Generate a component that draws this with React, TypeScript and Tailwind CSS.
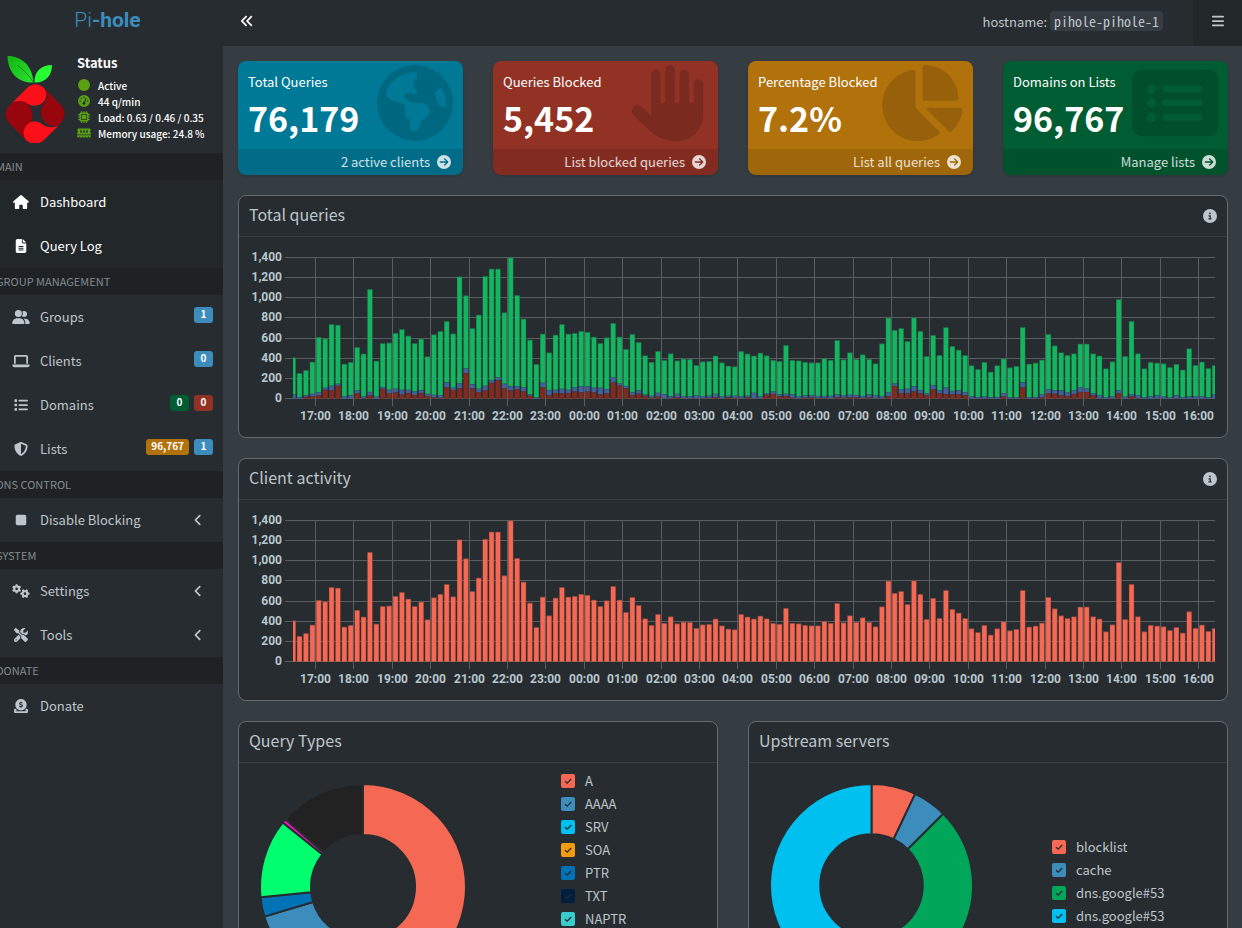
import React from "react";
import {
  FaAnglesLeft,
  FaAngleLeft,
  FaBars,
  FaChartPie,
  FaCircle,
  FaCircleArrowRight,
  FaCircleDollarToSlot,
  FaCircleInfo,
  FaEarthAmericas,
  FaFileLines,
  FaGaugeHigh,
  FaGears,
  FaHand,
  FaHouse,
  FaLaptop,
  FaList,
  FaMemory,
  FaMicrochip,
  FaRectangleList,
  FaScrewdriverWrench,
  FaShieldHalved,
  FaStop,
  FaUserGroup,
} from "react-icons/fa6";
import type { IconType } from "react-icons";

// queries per ten minute slot, 16:25 to 16:25 the next day
const totals = [
  407, 252, 281, 364, 609, 596, 738, 731, 344, 361, 510, 444, 1086, 374, 549,
  553, 649, 688, 622, 549, 592, 417, 636, 669, 768, 645, 1211, 1023, 698, 831,
  1215, 1288, 1288, 854, 1400, 1026, 791, 583, 341, 642, 457, 632, 738, 642,
  649, 669, 659, 612, 549, 606, 748, 612, 490, 639, 559, 427, 361, 470, 381,
  447, 377, 394, 391, 331, 367, 371, 424, 357, 324, 318, 470, 444, 424, 453,
  427, 381, 371, 530, 381, 377, 361, 357, 357, 400, 381, 579, 387, 457, 391,
  437, 391, 348, 546, 801, 679, 698, 569, 804, 669, 420, 629, 430, 708, 520,
  483, 430, 328, 291, 361, 265, 328, 397, 308, 321, 708, 344, 354, 384, 639,
  526, 457, 430, 447, 543, 543, 447, 424, 298, 367, 986, 420, 768, 447, 298,
  361, 354, 348, 311, 341, 285, 497, 331, 364, 301, 331,
];

const blocked = [
  0, 0, 20, 23, 33, 89, 83, 129, 0, 0, 53, 7, 33, 0, 99, 53, 63, 43, 56, 36, 56,
  26, 13, 10, 113, 83, 103, 255, 103, 63, 83, 156, 182, 103, 83, 93, 73, 30, 0,
  113, 36, 56, 53, 56, 73, 63, 73, 63, 43, 53, 162, 132, 103, 36, 50, 30, 10,
  23, 3, 7, 13, 3, 3, 3, 3, 7, 13, 3, 13, 7, 3, 13, 3, 3, 40, 46, 23, 26, 10, 3,
  10, 13, 7, 7, 3, 13, 10, 13, 13, 7, 13, 3, 3, 26, 126, 53, 53, 73, 53, 33, 93,
  53, 46, 43, 43, 33, 3, 0, 3, 0, 0, 23, 0, 0, 113, 0, 3, 13, 53, 50, 33, 26,
  46, 66, 66, 33, 3, 0, 3, 53, 0, 23, 7, 0, 0, 3, 0, 0, 3, 0, 0, 0, 0, 0, 0,
];

const cached = [
  43, 17, 13, 26, 30, 20, 46, 20, 23, 33, 30, 16, 33, 23, 17, 36, 36, 46, 33,
  36, 30, 23, 26, 23, 50, 26, 50, 46, 40, 36, 46, 26, 30, 46, 40, 30, 40, 13,
  13, 46, 50, 33, 46, 33, 40, 60, 50, 46, 66, 43, 50, 20, 23, 26, 33, 13, 20,
  36, 40, 17, 36, 20, 20, 30, 20, 23, 36, 20, 17, 23, 20, 17, 56, 20, 13, 26,
  20, 23, 33, 20, 23, 20, 20, 20, 26, 30, 23, 26, 23, 20, 30, 30, 20, 36, 26,
  40, 46, 50, 33, 20, 40, 30, 66, 33, 40, 30, 20, 17, 20, 13, 17, 30, 13, 13,
  50, 13, 13, 30, 40, 33, 50, 36, 36, 46, 36, 20, 30, 13, 20, 30, 23, 20, 26,
  13, 23, 30, 23, 13, 30, 13, 23, 23, 23, 13, 43,
];

const hours = [
  "17:00", "18:00", "19:00", "20:00", "21:00", "22:00", "23:00", "00:00",
  "01:00", "02:00", "03:00", "04:00", "05:00", "06:00", "07:00", "08:00",
  "09:00", "10:00", "11:00", "12:00", "13:00", "14:00", "15:00", "16:00",
];

const LEFT = 44;
const BASE = 151;
const PLOT_HEIGHT = 141;
const STEP = 6.4;

const scale = (value: number) => (value / 1400) * PLOT_HEIGHT;

interface Series {
  values: number[];
  fill: string;
  stroke: string;
}

const BarChart = ({ id, series }: { id: string; series: Series[] }) => {
  const ticks = [0, 200, 400, 600, 800, 1000, 1200, 1400];
  return (
    <svg
      viewBox="0 0 968 180"
      className="block w-full font-['Roboto',sans-serif] text-[12px] font-bold"
      role="img"
      aria-label={id}
    >
      <clipPath id={id}>
        <rect x={LEFT} y="0" width="922" height="170" />
      </clipPath>
      {ticks.map((tick) => {
        const y = Math.round(BASE - scale(tick)) + 0.5;
        return (
          <g key={tick}>
            <line x1="36" x2="966" y1={y} y2={y} stroke="#595d5f" />
            <text x="33" y={y + 3.5} textAnchor="end" fill="#b8c7ce">
              {tick.toLocaleString("en-US")}
            </text>
          </g>
        );
      })}
      {hours.map((hour, i) => {
        const x = Math.round(66 + i * 38.4) + 0.5;
        return (
          <g key={hour}>
            <line x1={x} x2={x} y1="10" y2="159" stroke="#595d5f" />
            <text x={x} y="173" textAnchor="middle" fill="#b8c7ce">
              {hour}
            </text>
          </g>
        );
      })}
      <g clipPath={`url(#${id})`}>
        {totals.map((_, i) => {
          let y = BASE + 0.5;
          return series.map((s) => {
            const h = scale(s.values[i]);
            y -= h;
            const x = LEFT + i * STEP - 2.4;
            return (
              <g key={s.fill + i}>
                <rect x={x} y={y} width="5.1" height={h} fill={s.stroke} />
                <rect
                  x={x + 0.4}
                  y={y + Math.min(0.8, h)}
                  width="4.3"
                  height={Math.max(h - 0.8, 0)}
                  fill={s.fill}
                />
              </g>
            );
          });
        })}
      </g>
    </svg>
  );
};

interface Slice {
  from: number;
  to: number;
  color: string;
}

const point = (r: number, deg: number) => {
  const a = ((deg - 90) * Math.PI) / 180;
  return `${(r * Math.cos(a)).toFixed(2)} ${(r * Math.sin(a)).toFixed(2)}`;
};

interface DoughnutProps {
  label: string;
  slices: Slice[];
  className: string;
}

const Doughnut = ({ label, slices, className }: DoughnutProps) => (
  <svg viewBox="-103 -103 206 206" className={className} role="img" aria-label={label}>
    {slices.map(({ from, to, color }) => {
      const large = to - from > 180 ? 1 : 0;
      return (
        <path
          key={color}
          d={`M${point(103, from)}A103 103 0 ${large} 1 ${point(103, to)}L${point(52, to)}A52 52 0 ${large} 0 ${point(52, from)}Z`}
          fill={color}
          stroke="#272c30"
          strokeWidth="2"
        />
      );
    })}
  </svg>
);

const queryTypes: Slice[] = [
  { from: 0, to: 190, color: "#f56954" },
  { from: 190, to: 253.3, color: "#3c8dbc" },
  { from: 253.3, to: 264.3, color: "#0073b7" },
  { from: 264.3, to: 308.8, color: "#01ff70" },
  { from: 308.8, to: 311.2, color: "#f012be" },
  { from: 311.2, to: 360, color: "#222222" },
];

const upstreams: Slice[] = [
  { from: 0, to: 25.5, color: "#f56954" },
  { from: 25.5, to: 45, color: "#3c8dbc" },
  { from: 45, to: 180, color: "#00a65a" },
  { from: 180, to: 360, color: "#00c0ef" },
];

const Legend = ({ items }: { items: { name: string; color: string }[] }) => (
  <ul>
    {items.map(({ name, color }, i) => (
      <li key={i} className="h-[23px]">
        <label className="flex h-full items-center text-[13px]">
          <span className="grid size-[14px] place-items-center">
            <input
              type="checkbox"
              defaultChecked
              className="col-start-1 row-start-1 size-[14px] appearance-none rounded-[2px]"
              style={{ backgroundColor: color }}
            />
            <svg viewBox="0 0 14 14" className="pointer-events-none col-start-1 row-start-1 size-[14px]">
              <path d="M4 7.2 6.2 9.2 10.2 5" fill="none" stroke="#272c30" strokeWidth="1.3" />
            </svg>
          </span>
          <span className="ml-[10px]">{name}</span>
        </label>
      </li>
    ))}
  </ul>
);

interface Badge {
  text: string;
  className: string;
}

interface NavItem {
  name: string;
  icon: IconType;
  active?: boolean;
  tree?: boolean;
  badges?: Badge[];
}

const nav: { title: string; items: NavItem[] }[] = [
  {
    title: "MAIN",
    items: [
      { name: "Dashboard", icon: FaHouse, active: true },
      { name: "Query Log", icon: FaFileLines, active: true },
    ],
  },
  {
    title: "GROUP MANAGEMENT",
    items: [
      { name: "Groups", icon: FaUserGroup, badges: [{ text: "1", className: "bg-[#3c8dbc]" }] },
      { name: "Clients", icon: FaLaptop, badges: [{ text: "0", className: "bg-[#3c8dbc]" }] },
      {
        name: "Domains",
        icon: FaList,
        badges: [
          { text: "0", className: "bg-[#005c32]" },
          { text: "0", className: "bg-[#913225]" },
        ],
      },
      {
        name: "Lists",
        icon: FaShieldHalved,
        badges: [
          { text: "96,767", className: "bg-[#b1720c]" },
          { text: "1", className: "bg-[#3c8dbc]" },
        ],
      },
    ],
  },
  { title: "DNS CONTROL", items: [{ name: "Disable Blocking", icon: FaStop, tree: true }] },
  {
    title: "SYSTEM",
    items: [
      { name: "Settings", icon: FaGears, tree: true },
      { name: "Tools", icon: FaScrewdriverWrench, tree: true },
    ],
  },
  { title: "DONATE", items: [{ name: "Donate", icon: FaCircleDollarToSlot }] },
];

const stats = [
  { icon: FaCircle, text: "Active" },
  { icon: FaGaugeHigh, text: "44 q/min" },
  { icon: FaMicrochip, text: "Load: 0.63 / 0.46 / 0.35" },
  { icon: FaMemory, text: "Memory usage: 24.8 %" },
];

const cards = [
  { label: "Total Queries", value: "76,179", link: "2 active clients", icon: FaEarthAmericas, className: "bg-[#007997]" },
  { label: "Queries Blocked", value: "5,452", link: "List blocked queries", icon: FaHand, className: "bg-[#913225]" },
  { label: "Percentage Blocked", value: "7.2%", link: "List all queries", icon: FaChartPie, className: "bg-[#b1720c]" },
  { label: "Domains on Lists", value: "96,767", link: "Manage lists", icon: FaRectangleList, className: "bg-[#005c32]" },
];

const Logo = () => (
  <svg viewBox="0 0 60 88" className="h-[88px] w-[60px]" aria-label="Pi-hole logo">
    <defs>
      <linearGradient id="leafDark" x1="0" y1="0" x2="1" y2="1">
        <stop offset="0" stopColor="#12b212" />
        <stop offset="1" stopColor="#2be52f" />
      </linearGradient>
    </defs>
    <path d="M2.500 1C14 1 27 8 28.500 27.500C15 28 3 20 2.500 1Z" fill="url(#leafDark)" />
    <path d="M12 10C19 16 25 21 28.300 27.500" fill="none" stroke="#128a18" strokeWidth="1" />
    <path d="M47 10C36 10 29 17 29.500 27.500C40 28 47 21 47 10Z" fill="#26ff32" />
    {/* dark lobes sit under the bright ones */}
    <path d="M6 49C-1 55-1 62 4 68L20 84L24 72C29 65 29 52 20 47C15 45 9 46 6 49Z" fill="#96060c" />
    <path d="M40 34L55 49C61 55 61 62 55 69C50 73 42 71 39 66C34 58 36 52 40 47C43 43 43 38 40 34Z" fill="#96060c" />
    <path d="M6 49L22 33C27 28 34 28 39 33C43 38 42 45 36 49C30 52 25 51 20 47C15 45 9 46 6 49Z" fill="#fb0f18" />
    <path d="M55 69L39 85C34 90 26 90 21 85C17 80 18 72 24 68C30 65 35 67 40 71C45 73 51 73 55 69Z" fill="#fb0f18" />
  </svg>
);

const Sidebar = () => (
  <aside className="w-[223px] shrink-0 overflow-hidden bg-[#272c30]">
    <div className="flex h-[107px] pl-[5px] pt-[9px]">
      <Logo />
      <div className="ml-3 text-white">
        <p className="text-[13px] font-bold leading-4">Status</p>
        <ul className="mt-[6px]">
          {stats.map(({ icon: Icon, text }) => (
            <li key={text} className="flex h-4 items-center whitespace-nowrap text-[10px] font-medium">
              <Icon className="w-[14px] text-[12px] text-[#5aa112]" />
              <span className="ml-[7px]">{text}</span>
            </li>
          ))}
        </ul>
      </div>
    </div>
    <nav>
      {nav.map(({ title, items }) => (
        <section key={title}>
          <h2 className="h-[27px] whitespace-nowrap bg-[#1e2225] text-[11px] leading-[27px] text-[#848b90]">
            <span className="-ml-1">{title}</span>
          </h2>
          {items.map(({ name, icon: Icon, active, tree, badges }) => (
            <a
              key={name}
              href="#"
              className={`flex h-[44px] items-center pl-3 text-[13px] ${active ? "bg-[#22272a] text-white" : "text-[#bec5cb]"}`}
            >
              <Icon className="w-[18px] text-[14px]" />
              <span className="ml-[10px] grow">{name}</span>
              {tree && <FaAngleLeft className="mr-[18px] text-[14px]" />}
              {badges && (
                <span className="mb-1 mr-[10px] flex gap-[5px]">
                  {badges.map((badge, i) => (
                    <span
                      key={i}
                      className={`h-4 min-w-[19px] rounded-[3px] px-[5px] text-center text-[10px] font-bold leading-[14px] text-white ${badge.className}`}
                    >
                      {badge.text}
                    </span>
                  ))}
                </span>
              )}
            </a>
          ))}
        </section>
      ))}
    </nav>
  </aside>
);

interface PanelProps {
  title: string;
  info?: boolean;
  children: React.ReactNode;
}

const Panel = ({ title, info, children }: PanelProps) => (
  <section className="rounded-lg border border-[#666a6d] bg-[#272c30]">
    <div className="flex h-[41px] items-center justify-between border-b border-[#3a4045] px-[10px]">
      <h3 className="pb-1 text-[16px] leading-5">{title}</h3>
      {info && (
        <button type="button" aria-label="More information">
          <FaCircleInfo className="text-[14px]" />
        </button>
      )}
    </div>
    <div className="px-[10px] pb-[10px] pt-[6px]">{children}</div>
  </section>
);

const App = () => {
  return (
    <div className="min-h-screen bg-[#353c42] font-['Noto_Sans_CJK_JP',sans-serif] text-[#bec5cb]">
      <header className="flex h-[46px] items-center bg-[#272c30]">
        <a
          href="#"
          className="w-[223px] shrink-0 pb-1 text-center font-['Roboto',sans-serif] text-[21px] font-light text-[#3c8dbc]"
        >
          <span className="-ml-2">
            Pi<b className="font-bold">-hole</b>
          </span>
        </a>
        <button type="button" aria-label="Toggle navigation" className="ml-[17px] mb-1 text-white">
          <FaAnglesLeft className="text-[14px]" />
        </button>
        <p className="ml-auto mr-[30px] pb-1 text-[13px]">
          hostname:{" "}
          <code className="rounded-[4px] bg-[#353c42] px-1 font-['Noto_Sans_Mono_CJK_JP','Liberation_Mono',monospace] text-[14px] leading-5">
            pihole-pihole-1
          </code>
        </p>
        <button
          type="button"
          aria-label="Menu"
          className="grid h-full w-[49px] place-items-center bg-[#22272a] pb-1"
        >
          <FaBars className="text-[14px]" />
        </button>
      </header>

      <div className="flex min-h-[calc(100vh-46px)]">
        <Sidebar />
        <main className="flex min-w-0 grow flex-col gap-5 pl-[15px] pr-[14px] pt-[15px]">
          <div className="grid grid-cols-4 gap-[30px]">
            {cards.map(({ label, value, link, icon: Icon, className }) => (
              <div
                key={label}
                className={`relative overflow-hidden rounded-lg shadow-sm ${className}`}
              >
                <Icon
                  preserveAspectRatio="xMaxYMid"
                  className="absolute right-[10px] top-1 h-[76px] w-[86px] text-black/15"
                />
                <div className="relative h-[88px] px-[10px] pt-[11px] text-white">
                  <p className="text-[13px] leading-5">{label}</p>
                  <p className="mt-1 text-[34px] font-bold leading-[44px]">{value}</p>
                </div>
                <a
                  href="#"
                  className="relative flex h-[26px] items-center justify-end gap-[7px] bg-black/10 pr-3 text-[13px] text-white/80"
                >
                  {link}
                  <FaCircleArrowRight className="text-[14px]" />
                </a>
              </div>
            ))}
          </div>

          <Panel title="Total queries" info>
            <div className="pt-1">
              <BarChart
                id="queries-over-time"
                series={[
                  { values: blocked, fill: "#802b20", stroke: "#6b2a22" },
                  { values: cached, fill: "#40629b", stroke: "#395183" },
                  {
                    values: totals.map((t, i) => t - blocked[i] - cached[i]),
                    fill: "#14b560",
                    stroke: "#1b7f4b",
                  },
                ]}
              />
            </div>
          </Panel>

          <Panel title="Client activity" info>
            <div className="pt-1">
              <BarChart
                id="clients-over-time"
                series={[{ values: totals, fill: "#f56954", stroke: "#a54d42" }]}
              />
            </div>
          </Panel>

          <div className="grid grid-cols-2 gap-[30px]">
            <Panel title="Query Types">
              <div className="flex justify-between">
                <div className="pl-[11px] pt-[15px]">
                  <Doughnut label="Query types" slices={queryTypes} className="size-[206px]" />
                </div>
                <div className="w-[146px]">
                  <Legend
                    items={[
                      { name: "A", color: "#f56954" },
                      { name: "AAAA", color: "#3c8dbc" },
                      { name: "SRV", color: "#00c0ef" },
                      { name: "SOA", color: "#f39c12" },
                      { name: "PTR", color: "#0073b7" },
                      { name: "TXT", color: "#001f3f" },
                      { name: "NAPTR", color: "#39cccc" },
                    ]}
                  />
                </div>
              </div>
            </Panel>
            <Panel title="Upstream servers">
              <div className="flex justify-between">
                <div className="pl-[11px] pt-[15px]">
                  <Doughnut label="Upstream servers" slices={upstreams} className="size-[203px]" />
                </div>
                <div className="w-[165px] pt-[66px]">
                  <Legend
                    items={[
                      { name: "blocklist", color: "#f56954" },
                      { name: "cache", color: "#3c8dbc" },
                      { name: "dns.google#53", color: "#00a65a" },
                      { name: "dns.google#53", color: "#00c0ef" },
                    ]}
                  />
                </div>
              </div>
            </Panel>
          </div>
        </main>
      </div>
    </div>
  );
};

export default App;
